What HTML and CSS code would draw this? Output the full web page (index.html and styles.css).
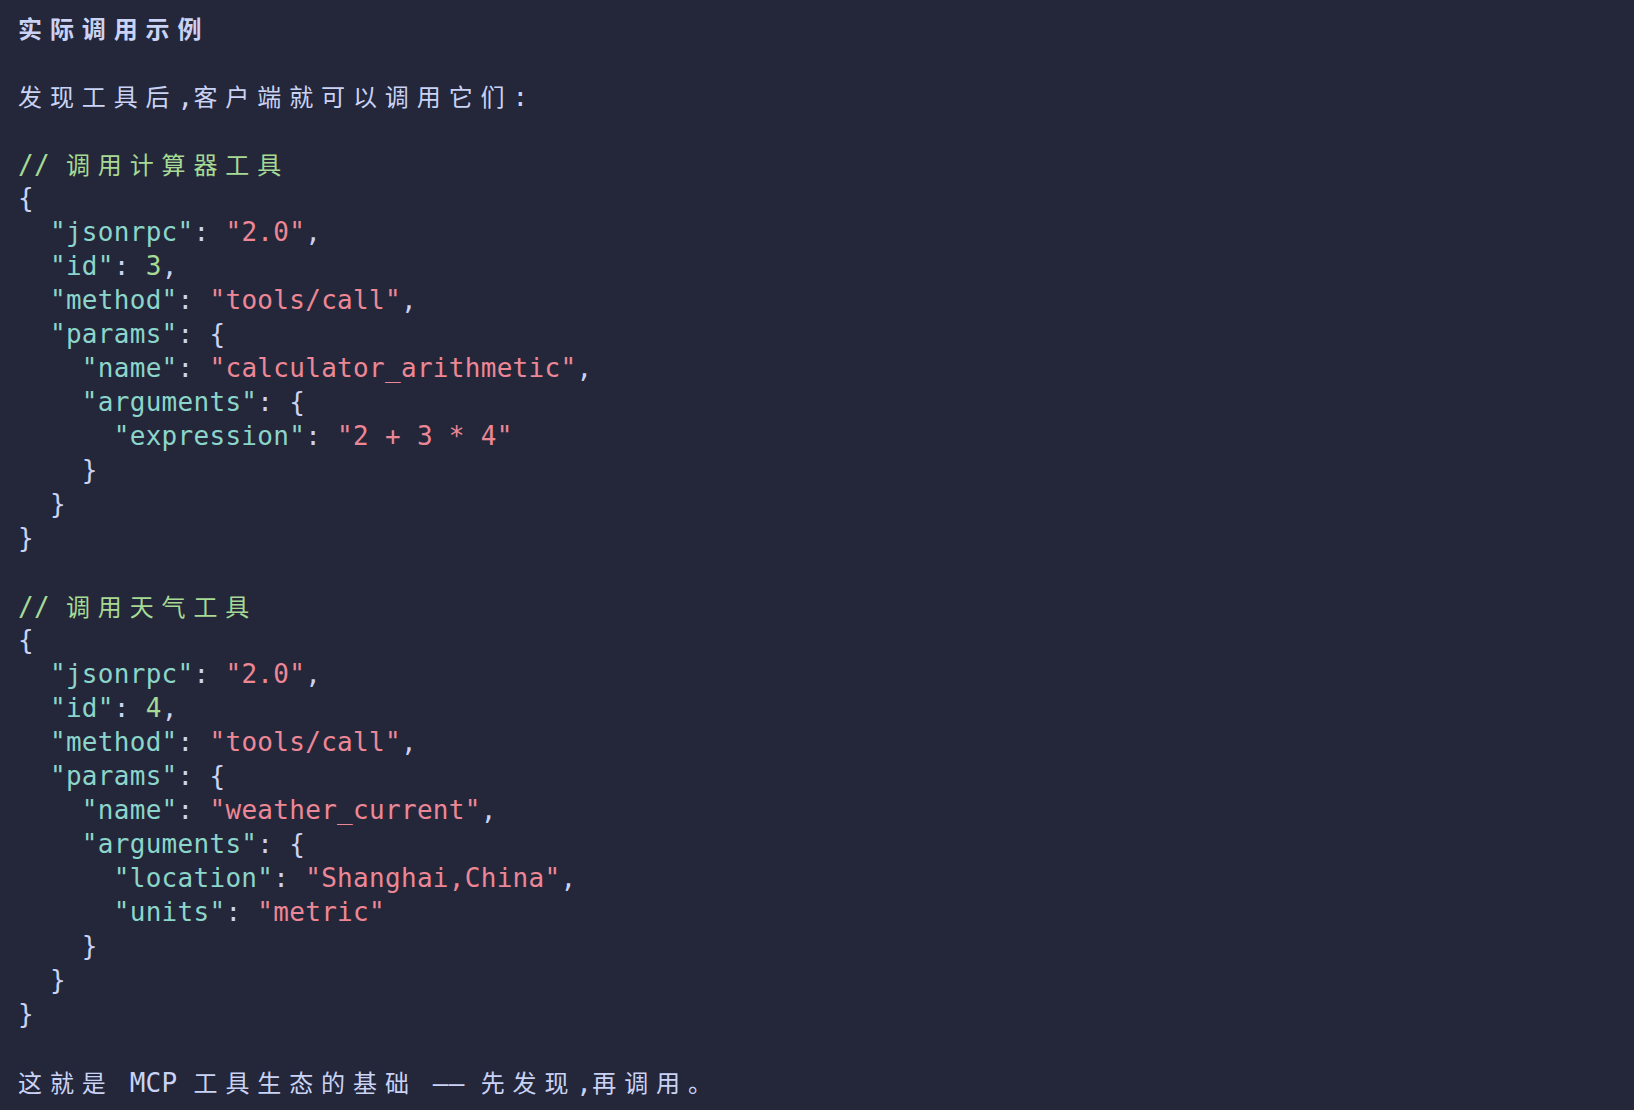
FILE: index.html
```html
<!DOCTYPE html>
<html lang="zh-CN">
<head>
<meta charset="utf-8">
<title>实际调用示例</title>
<link rel="stylesheet" href="styles.css">
</head>
<body>
<main class="term">
<div class="ln title"><span class="cjk">实际调用示例</span></div>
<div class="ln"></div>
<div class="ln"><span class="cjk">发现工具后</span>,<span class="cjk">客户端就可以调用它们</span>:</div>
<div class="ln"></div>
<div class="ln cm">// <span class="cjk">调用计算器工具</span></div>
<div class="ln">{</div>
<div class="ln">  <span class="k">"jsonrpc"</span>: <span class="s">"2.0"</span>,</div>
<div class="ln">  <span class="k">"id"</span>: <span class="n">3</span>,</div>
<div class="ln">  <span class="k">"method"</span>: <span class="s">"tools/call"</span>,</div>
<div class="ln">  <span class="k">"params"</span>: {</div>
<div class="ln">    <span class="k">"name"</span>: <span class="s">"calculator_arithmetic"</span>,</div>
<div class="ln">    <span class="k">"arguments"</span>: {</div>
<div class="ln">      <span class="k">"expression"</span>: <span class="s">"2 + 3 * 4"</span></div>
<div class="ln">    }</div>
<div class="ln">  }</div>
<div class="ln">}</div>
<div class="ln"></div>
<div class="ln cm">// <span class="cjk">调用天气工具</span></div>
<div class="ln">{</div>
<div class="ln">  <span class="k">"jsonrpc"</span>: <span class="s">"2.0"</span>,</div>
<div class="ln">  <span class="k">"id"</span>: <span class="n">4</span>,</div>
<div class="ln">  <span class="k">"method"</span>: <span class="s">"tools/call"</span>,</div>
<div class="ln">  <span class="k">"params"</span>: {</div>
<div class="ln">    <span class="k">"name"</span>: <span class="s">"weather_current"</span>,</div>
<div class="ln">    <span class="k">"arguments"</span>: {</div>
<div class="ln">      <span class="k">"location"</span>: <span class="s">"Shanghai,China"</span>,</div>
<div class="ln">      <span class="k">"units"</span>: <span class="s">"metric"</span></div>
<div class="ln">    }</div>
<div class="ln">  }</div>
<div class="ln">}</div>
<div class="ln"></div>
<div class="ln"><span class="cjk">这就是</span> MCP <span class="cjk">工具生态的基础</span> —— <span class="cjk">先发现</span>,<span class="cjk">再调用。</span></div>
</main>
</body>
</html>
```
FILE: styles.css
```css
html, body {
  margin: 0;
  padding: 0;
  background: #24273a;
}
body {
  width: 1634px;
  height: 1110px;
  overflow: hidden;
}
.term {
  padding: 11px 0 0 18px;
  font-family: "DejaVu Sans Mono", "Noto Sans CJK SC", monospace;
  font-size: 26px;
  letter-spacing: 0.3px;
  color: #cad3f5;
}
.ln {
  height: 34px;
  line-height: 34px;
  white-space: pre;
}
.cjk {
  font-size: 24px;
  letter-spacing: 7.9px;
  font-family: "Noto Sans CJK SC", sans-serif;
}
.title {
  font-weight: 700;
}
.cm {
  color: #a6da95;
}
.k {
  color: #8bd5ca;
}
.s {
  color: #ed8796;
}
.n {
  color: #a6da95;
}
```
